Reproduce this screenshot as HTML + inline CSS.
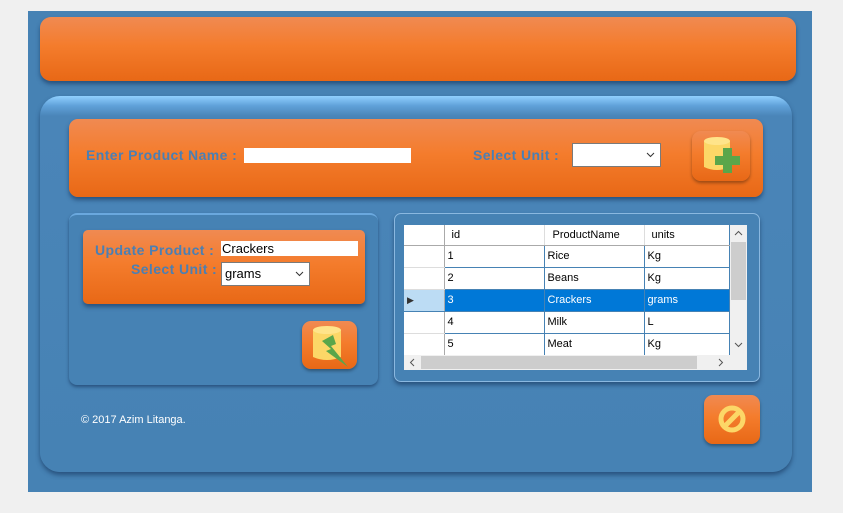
<!DOCTYPE html>
<html><head><style>
*{margin:0;padding:0;box-sizing:border-box}
body{width:843px;height:513px;background:#f0f0f0;position:relative;overflow:hidden;font-family:"Liberation Sans",Arial,sans-serif}
.abs{position:absolute}
.blue{left:28px;top:11px;width:784px;height:481px;background:#4682b4}
.or{background:linear-gradient(#f08a52 0%,#f47c2c 45%,#e86816 100%);box-shadow:0 3px 4px rgba(20,50,90,.6)}
.lbl{color:#4a7fb4;font-weight:bold;font-size:14px;letter-spacing:0.4px;white-space:nowrap}
.tb{background:#fff}
.sel{background:#fff;border:1px solid #7a7a7a}
.chev{position:absolute;right:5px;top:8px}
table{border-collapse:collapse;font-size:11px;font-family:"Liberation Sans",Arial,sans-serif}
td{height:22px;padding:0 3px;border-bottom:1px solid #4682b4;border-right:1px solid #4682b4}
.btn{border-radius:9px}
</style></head><body>
<div class="abs blue"></div>
<div class="abs or" style="left:40px;top:17px;width:756px;height:64px;border-radius:11px"></div>
<div class="abs" style="left:40px;top:96px;width:752px;height:376px;border-radius:20px;background:linear-gradient(#90d0ff 0px,#5fa0d8 10px,#4a85b8 20px,#4682b4 100%);box-shadow:0 3px 5px rgba(20,50,90,.6)"></div>

<div class="abs or" style="left:69px;top:119px;width:694px;height:78px;border-radius:9px"></div>
<div class="abs lbl" style="left:86px;top:147px">Enter Product Name :</div>
<div class="abs tb" style="left:244px;top:148px;width:167px;height:15px"></div>
<div class="abs lbl" style="left:473px;top:147px">Select Unit :</div>
<div class="abs sel" style="left:572px;top:143px;width:89px;height:24px"><svg class="chev" width="9" height="6"><path d="M1 1l3.5 3.5L8 1" fill="none" stroke="#333"/></svg></div>
<div class="abs or btn" style="left:692px;top:131px;width:58px;height:50px;box-shadow:0 2px 3px rgba(0,0,0,.35)">
<svg width="58" height="50"><path d="M12 10v26q13 6 26 0V10z" fill="#fcd767"/><ellipse cx="25" cy="10" rx="13" ry="4" fill="#ffe48a"/><path d="M31 17h9v8h8v9h-8v8h-9v-8h-8v-9h8z" fill="#5aa64a"/></svg></div>

<div class="abs" style="left:69px;top:213px;width:309px;height:172px;border-radius:8px;background:#4682b4;border-top:2px solid #6aa8de;box-shadow:0 2px 3px rgba(20,50,90,.6)"></div>
<div class="abs or" style="left:83px;top:230px;width:282px;height:74px;border-radius:5px"></div>
<div class="abs lbl" style="left:95px;top:242px">Update Product :</div>
<div class="abs tb" style="left:221px;top:241px;width:137px;height:15px;font-size:13px;line-height:15px;padding-left:1px">Crackers</div>
<div class="abs lbl" style="left:131px;top:261px">Select Unit :</div>
<div class="abs sel" style="left:221px;top:262px;width:89px;height:24px;font-size:13px;line-height:22px;padding-left:3px">grams<svg class="chev" width="9" height="6"><path d="M1 1l3.5 3.5L8 1" fill="none" stroke="#333"/></svg></div>
<div class="abs or btn" style="left:302px;top:321px;width:55px;height:48px;box-shadow:0 2px 3px rgba(0,0,0,.35)">
<svg width="55" height="48"><path d="M11 9v27q14 6 28 0V9z" fill="#fcd767"/><ellipse cx="25" cy="9" rx="14" ry="4" fill="#ffe48a"/><path d="M20 20l11-6 3 9-5 2 17 21-22-16 5-2z" fill="#5aa64a"/></svg></div>

<div class="abs" style="left:394px;top:213px;width:366px;height:169px;border-radius:7px;background:#4682b4;border:1px solid #8ab8e0;box-shadow:0 3px 4px rgba(20,50,90,.6)"></div>
<div class="abs" style="left:404px;top:225px;width:343px;height:145px;background:#fff;overflow:hidden">
<table style="width:326px">
<tr style="height:20px"><td style="width:40px;height:20px;border-right:1px solid #aaa;border-bottom:1px solid #aaa"></td><td style="width:100px;height:20px;border-right:1px solid #ddd;border-bottom:1px solid #aaa;padding-left:7px">id</td><td style="width:100px;height:20px;border-right:1px solid #ddd;border-bottom:1px solid #aaa;padding-left:8px">ProductName</td><td style="height:20px;border-bottom:1px solid #aaa;padding-left:7px">units</td></tr>
<tr><td style="border-right:1px solid #aaa;border-bottom:1px solid #ddd"></td><td>1</td><td>Rice</td><td>Kg</td></tr>
<tr><td style="border-right:1px solid #aaa;border-bottom:1px solid #ddd"></td><td>2</td><td>Beans</td><td>Kg</td></tr>
<tr style="background:#0078d7;color:#fff"><td style="background:#bcdcf4;color:#333;border-right:1px solid #aaa;font-size:9px">&#9654;</td><td>3</td><td>Crackers</td><td>grams</td></tr>
<tr><td style="border-right:1px solid #aaa;border-bottom:1px solid #ddd"></td><td>4</td><td>Milk</td><td>L</td></tr>
<tr><td style="border-right:1px solid #aaa"></td><td>5</td><td>Meat</td><td>Kg</td></tr>
</table>
<div class="abs" style="left:326px;top:0;width:17px;height:130px;background:#f0f0f0"><div class="abs" style="left:1px;top:17px;width:15px;height:58px;background:#cdcdcd"></div>
<svg class="abs" style="left:4px;top:5px" width="9" height="6"><path d="M1 5l3.5-3.5L8 5" fill="none" stroke="#555"/></svg>
<svg class="abs" style="left:4px;top:117px" width="9" height="6"><path d="M1 1l3.5 3.5L8 1" fill="none" stroke="#555"/></svg></div>
<div class="abs" style="left:0;top:130px;width:343px;height:15px;background:#f0f0f0"><div class="abs" style="left:17px;top:1px;width:276px;height:13px;background:#cdcdcd"></div>
<svg class="abs" style="left:5px;top:3px" width="6" height="9"><path d="M5 1L1.5 4.5 5 8" fill="none" stroke="#555"/></svg>
<svg class="abs" style="left:314px;top:3px" width="6" height="9"><path d="M1 1l3.5 3.5L1 8" fill="none" stroke="#555"/></svg></div>
<div class="abs" style="left:326px;top:130px;width:17px;height:15px;background:#f0f0f0"></div>
</div>

<div class="abs" style="left:81px;top:414px;color:#fff;font-size:11px">© 2017 Azim Litanga.</div>
<div class="abs or btn" style="left:704px;top:395px;width:56px;height:49px;box-shadow:0 2px 3px rgba(0,0,0,.35)">
<svg width="56" height="49"><circle cx="28" cy="24" r="11" fill="none" stroke="#fcd767" stroke-width="5"/><path d="M21 31L35 17" stroke="#fcd767" stroke-width="5"/></svg></div>
</body></html>
